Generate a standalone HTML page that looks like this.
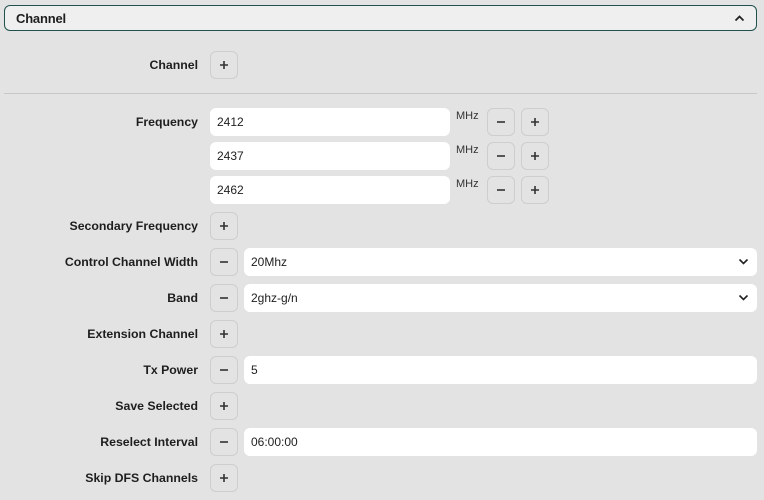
<!DOCTYPE html>
<html><head><meta charset="utf-8"><style>
*{box-sizing:border-box;margin:0;padding:0}
body{width:764px;height:500px;background:#e2e3e2;font-family:"Liberation Sans",Arial,sans-serif;color:#1e1e1e;position:relative;overflow:hidden}
.hdr{position:absolute;left:4px;top:5px;width:753px;height:26px;background:#efefef;border:1.5px solid #1f524c;border-radius:6px}
.hdr span{position:absolute;left:11px;top:5px;font-size:13px;font-weight:bold;letter-spacing:-0.2px}
.hdr svg{position:absolute;right:11px;top:8px}
.lbl{position:absolute;right:566px;font-size:12.3px;font-weight:bold;letter-spacing:0;white-space:nowrap}
.btn{position:absolute;width:28px;height:28px;border:1px solid #cdcecd;border-radius:6px;background:#e2e3e2}
.btn svg{position:absolute;left:8px;top:8px}
.inp{position:absolute;height:28px;background:#fff;border-radius:6px;font-size:12px;padding-left:7px;line-height:28px}
.inp svg{position:absolute;right:8px;top:10px}
.mhz{position:absolute;left:456px;font-size:11px;color:#333}
.div{position:absolute;left:4px;top:93px;width:753px;height:1px;background:#c6c7c6}
</style></head><body>
<div class="hdr"><span>Channel</span><svg width="11" height="8" viewBox="0 0 11 8"><path d="M1.5 6.5L5.5 2.5L9.5 6.5" fill="none" stroke="#222" stroke-width="1.8"/></svg></div>

<div class="lbl" style="top:58px">Channel</div>
<div class="btn" style="left:210px;top:51px"><svg width="10" height="10"><path d="M5 1V9M1 5H9" stroke="#333" stroke-width="1.6"/></svg></div>
<div class="div"></div>

<div class="lbl" style="top:115px">Frequency</div>
<div class="inp" style="left:210px;top:108px;width:240px">2412</div>
<div class="mhz" style="top:110px">MHz</div>
<div class="btn" style="left:487px;top:108px"><svg width="10" height="10"><path d="M1 5H9" stroke="#333" stroke-width="1.6"/></svg></div>
<div class="btn" style="left:521px;top:108px"><svg width="10" height="10"><path d="M5 1V9M1 5H9" stroke="#333" stroke-width="1.6"/></svg></div>
<div class="inp" style="left:210px;top:142px;width:240px">2437</div>
<div class="mhz" style="top:144px">MHz</div>
<div class="btn" style="left:487px;top:142px"><svg width="10" height="10"><path d="M1 5H9" stroke="#333" stroke-width="1.6"/></svg></div>
<div class="btn" style="left:521px;top:142px"><svg width="10" height="10"><path d="M5 1V9M1 5H9" stroke="#333" stroke-width="1.6"/></svg></div>
<div class="inp" style="left:210px;top:176px;width:240px">2462</div>
<div class="mhz" style="top:178px">MHz</div>
<div class="btn" style="left:487px;top:176px"><svg width="10" height="10"><path d="M1 5H9" stroke="#333" stroke-width="1.6"/></svg></div>
<div class="btn" style="left:521px;top:176px"><svg width="10" height="10"><path d="M5 1V9M1 5H9" stroke="#333" stroke-width="1.6"/></svg></div>

<div class="lbl" style="top:219px">Secondary Frequency</div>
<div class="btn" style="left:210px;top:212px"><svg width="10" height="10"><path d="M5 1V9M1 5H9" stroke="#333" stroke-width="1.6"/></svg></div>

<div class="lbl" style="top:255px">Control Channel Width</div>
<div class="btn" style="left:210px;top:248px"><svg width="10" height="10"><path d="M1 5H9" stroke="#333" stroke-width="1.6"/></svg></div>
<div class="inp" style="left:244px;top:248px;width:513px">20Mhz<svg width="11" height="8" viewBox="0 0 11 8"><path d="M1.5 1.5L5.5 5.5L9.5 1.5" fill="none" stroke="#222" stroke-width="1.6"/></svg></div>

<div class="lbl" style="top:291px">Band</div>
<div class="btn" style="left:210px;top:284px"><svg width="10" height="10"><path d="M1 5H9" stroke="#333" stroke-width="1.6"/></svg></div>
<div class="inp" style="left:244px;top:284px;width:513px">2ghz-g/n<svg width="11" height="8" viewBox="0 0 11 8"><path d="M1.5 1.5L5.5 5.5L9.5 1.5" fill="none" stroke="#222" stroke-width="1.6"/></svg></div>

<div class="lbl" style="top:327px">Extension Channel</div>
<div class="btn" style="left:210px;top:320px"><svg width="10" height="10"><path d="M5 1V9M1 5H9" stroke="#333" stroke-width="1.6"/></svg></div>

<div class="lbl" style="top:363px">Tx Power</div>
<div class="btn" style="left:210px;top:356px"><svg width="10" height="10"><path d="M1 5H9" stroke="#333" stroke-width="1.6"/></svg></div>
<div class="inp" style="left:244px;top:356px;width:513px">5</div>

<div class="lbl" style="top:399px">Save Selected</div>
<div class="btn" style="left:210px;top:392px"><svg width="10" height="10"><path d="M5 1V9M1 5H9" stroke="#333" stroke-width="1.6"/></svg></div>

<div class="lbl" style="top:435px">Reselect Interval</div>
<div class="btn" style="left:210px;top:428px"><svg width="10" height="10"><path d="M1 5H9" stroke="#333" stroke-width="1.6"/></svg></div>
<div class="inp" style="left:244px;top:428px;width:513px">06:00:00</div>

<div class="lbl" style="top:471px">Skip DFS Channels</div>
<div class="btn" style="left:210px;top:464px"><svg width="10" height="10"><path d="M5 1V9M1 5H9" stroke="#333" stroke-width="1.6"/></svg></div>
</body></html>
